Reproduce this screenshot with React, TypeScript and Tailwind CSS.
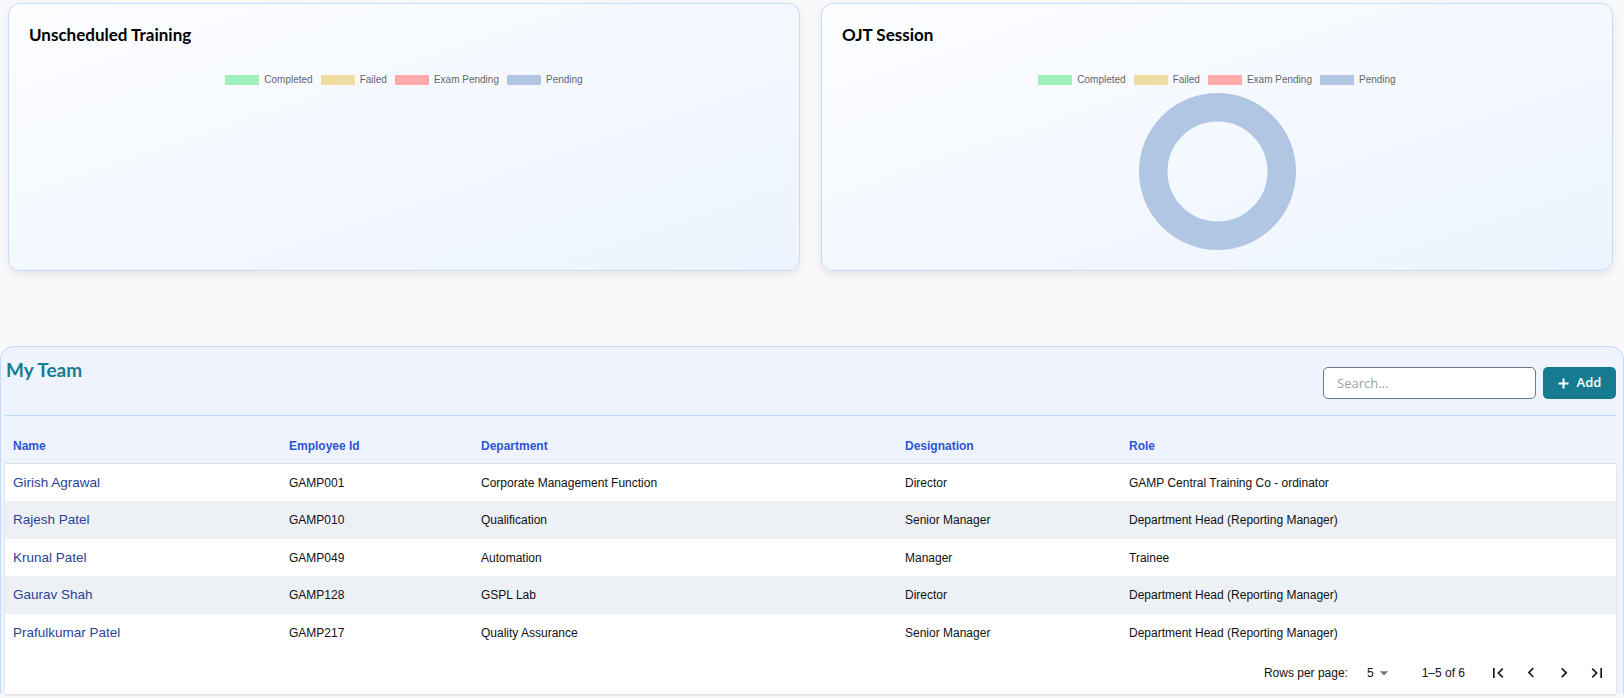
import React from "react";

const legend = [
  { label: "Completed", color: "bg-[#9ff0ba]" },
  { label: "Failed", color: "bg-[#f1dca1]" },
  { label: "Exam Pending", color: "bg-[#ffaaaa]" },
  { label: "Pending", color: "bg-[#b1c6e3]" },
];

const rows = [
  ["Girish Agrawal", "GAMP001", "Corporate Management Function", "Director", "GAMP Central Training Co - ordinator"],
  ["Rajesh Patel", "GAMP010", "Qualification", "Senior Manager", "Department Head (Reporting Manager)"],
  ["Krunal Patel", "GAMP049", "Automation", "Manager", "Trainee"],
  ["Gaurav Shah", "GAMP128", "GSPL Lab", "Director", "Department Head (Reporting Manager)"],
  ["Prafulkumar Patel", "GAMP217", "Quality Assurance", "Senior Manager", "Department Head (Reporting Manager)"],
];

function Legend() {
  return (
    <div className="mt-[27px] flex h-[12px] items-center justify-center gap-[8px] font-['Liberation_Sans',Arial,sans-serif] text-[10px] leading-[12px] text-[#666]">
      {legend.map((l) => (
        <div key={l.label} className="flex items-center gap-[5px]">
          <span className={"block h-[10px] w-[34px] " + l.color} />
          <span>{l.label}</span>
        </div>
      ))}
    </div>
  );
}

function Card({ title, donut }: { title: string; donut?: boolean }) {
  return (
    <div className="h-[268px] flex-1 rounded-xl border border-[#c5dcfb] bg-linear-to-br from-[#fcfdff] to-[#edf4ff] px-[20px] pt-[19px] shadow-[0_4px_10px_rgba(0,0,0,0.08)]">
      <h2 className="font-['Lato',sans-serif] text-[17px] font-bold leading-[24px] text-black">{title}</h2>
      <Legend />
      {donut && (
        <svg width="157" height="157" viewBox="0 0 157 157" className="mx-auto mt-[7px] block">
          <circle cx="78.5" cy="78.5" r="64.25" fill="none" stroke="#b1c6e3" strokeWidth="28.5" />
        </svg>
      )}
    </div>
  );
}

const cols = "grid grid-cols-[276px_192px_424px_224px_1fr]";

function Icon({ d, className }: { d: string; className?: string }) {
  return (
    <svg viewBox="0 0 24 24" width="20" height="20" className={className}>
      <path d={d} fill="currentColor" />
    </svg>
  );
}

export default function App() {
  return (
    <div className="h-[698px] w-full overflow-hidden bg-[#f9f9fb] font-['Liberation_Sans',Arial,sans-serif]">
      <div className="flex gap-[21px] pl-[8px] pr-[11px] pt-[3px]">
        <Card title="Unscheduled Training" />
        <Card title="OJT Session" donut />
      </div>

      <section className="mt-[75px] rounded-t-[14px] border border-b-0 border-[#c6dbf9] bg-[#eef3fd] pl-[4px] pr-[7px]">
        <div className="flex h-[69px] items-start justify-between border-b border-[#bcd6f7]">
          <h2 className="pl-[1px] pt-[9px] font-['Lato',sans-serif] text-[19px] font-bold leading-[28px] text-[#167d92]">My Team</h2>
          <div className="mt-[20px] flex gap-[7px]">
            <input
              placeholder="Search..."
              className="h-[32px] w-[213px] rounded-[5px] border border-[#6b7891] bg-white px-[13px] font-['Open_Sans',sans-serif] text-[13px] text-black outline-none placeholder:text-[#9aa1ab]"
            />
            <button className="flex h-[32px] w-[73px] items-center justify-center gap-[8px] rounded-[5px] bg-[#167a91] font-['Open_Sans',sans-serif] text-[13px] font-semibold text-white">
              <svg width="11" height="11" viewBox="0 0 11 11">
                <path d="M5.5 0.5v10M0.5 5.5h10" stroke="white" strokeWidth="2" />
              </svg>
              Add
            </button>
          </div>
        </div>

        <div className={cols + " h-[48px] border-b border-[#e0e0e0] pt-[22px] text-[12px] font-bold leading-[16px] text-[#3154d6]"}>
          <div className="pl-[8px]">Name</div>
          <div className="pl-[8px]">Employee Id</div>
          <div className="pl-[8px]">Department</div>
          <div className="pl-[8px]">Designation</div>
          <div className="pl-[8px]">Role</div>
        </div>

        <div className="bg-white shadow-[0_1px_2px_rgba(0,0,0,0.14)]">
          {rows.map((r, i) => (
            <div
              key={r[1]}
              className={
                cols +
                " items-center text-[12px] leading-[16px] text-[#111] " +
                (i % 2 === 1 ? "h-[38px] bg-[#edf0f4]" : "h-[37px] bg-white")
              }
            >
              <div className="pl-[8px] text-[13.5px] text-[#2b3f9c]">{r[0]}</div>
              <div className="pl-[8px]">{r[1]}</div>
              <div className="pl-[8px]">{r[2]}</div>
              <div className="pl-[8px]">{r[3]}</div>
              <div className="pl-[8px]">{r[4]}</div>
            </div>
          ))}
          <div className="flex h-[43px] items-center justify-end pr-[9px] text-[12px] leading-[16px] text-[#111]">
            <span>Rows per page:</span>
            <span className="ml-[19px] flex items-center">
              5
              <Icon d="M7 10l5 5 5-5z" className="text-[#757575]" />
            </span>
            <span className="ml-[28px]">1–5 of 6</span>
            <div className="ml-[23px] flex gap-[13px] text-[#1a1a1a]">
              <Icon d="M18.41 16.59L13.82 12l4.59-4.59L17 6l-6 6 6 6zM6 6h2v12H6z" />
              <Icon d="M15.41 16.09l-4.58-4.59 4.58-4.59L14 5.5l-6 6 6 6z" />
              <Icon d="M8.59 16.34l4.58-4.59-4.58-4.59L10 5.75l6 6-6 6z" />
              <Icon d="M5.59 7.41L10.18 12l-4.59 4.59L7 18l6-6-6-6zM16 6h2v12h-2z" />
            </div>
          </div>
        </div>
      </section>
    </div>
  );
}
